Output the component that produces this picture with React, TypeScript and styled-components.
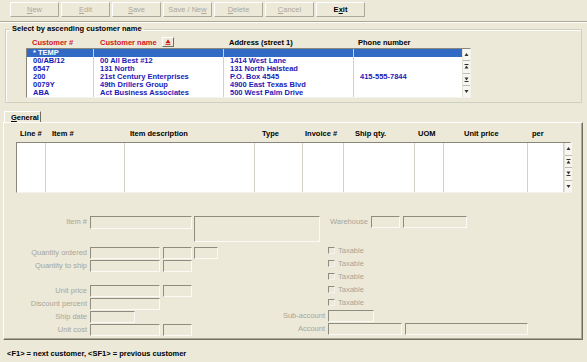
import styled, { createGlobalStyle } from 'styled-components';

const Global = createGlobalStyle`
  html, body { margin: 0; padding: 0; background: #ECE9D8; }
  body {
    font-family: "Liberation Sans", Arial, sans-serif;
    font-size: 7.5px;
    width: 587px; height: 362px; overflow: hidden;
  }
  * { box-sizing: border-box; }
`;

const Toolbar = styled.div`
  display: flex; gap: 2px;
  height: 22px; padding: 2px 0 0 10px;
  border-bottom: 1px solid #ACA899;
  box-shadow: 0 1px 0 #fff;
`;

const ToolButton = styled.button<{ $active?: boolean }>`
  width: 49px; height: 15px; padding: 0;
  background: #ECE9D8;
  border: 1px solid; border-color: #fff #ACA899 #ACA899 #fff;
  font-family: "Liberation Sans", Arial, sans-serif;
  font-size: 7.5px;
  font-weight: ${(p) => (p.$active ? 700 : 400)};
  color: ${(p) => (p.$active ? '#000' : '#ACA899')};
  u { text-decoration: underline; }
`;

const Group = styled.fieldset`
  margin: 3px 5px 0; padding: 3px 0 4px 20px;
  border: 1px solid #D0D0BF;
  box-shadow: inset 1px 1px 0 #fff;
  min-width: 0;
`;

const Legend = styled.legend`
  margin-left: -16px; padding: 0 2px;
  font-weight: 700; line-height: 8px; color: #000;
`;

const listCols = '67px 130px 130px 108px 8px';

const HeaderRow = styled.div`
  display: grid; grid-template-columns: ${listCols};
  height: 12px; align-items: center;
`;

const HeadCell = styled.div<{ $red?: boolean; $pad?: number }>`
  display: flex; align-items: center;
  padding-left: ${(p) => p.$pad ?? 6}px;
  font-weight: 700;
  color: ${(p) => (p.$red ? '#D01818' : '#000')};
`;

const SortButton = styled.span`
  display: inline-flex; align-items: center; justify-content: center;
  width: 12px; height: 10px; margin-left: 5px;
  border: 1px solid; border-color: #fff #716F64 #716F64 #fff;
  background: #ECE9D8;
`;

const ListBox = styled.div`
  display: flex;
  width: 445px; height: 50px;
  border: 1px solid; border-color: #8A877A #F4F3EE #F4F3EE #8A877A;
  background: #fff;
`;

const ListRows = styled.div`
  flex: 1; display: flex; flex-direction: column;
`;

const ListRow = styled.div<{ $sel?: boolean }>`
  display: grid; grid-template-columns: 67px 130px 130px 1fr;
  height: 8px; line-height: 8px;
  background: ${(p) => (p.$sel ? '#316AC5' : '#fff')};
  color: ${(p) => (p.$sel ? '#fff' : '#1A1AB8')};
  font-weight: 700;
`;

const ListCell = styled.div`
  padding-left: 6px; white-space: nowrap; overflow: hidden;
  border-right: 1px solid #D4D0C8;
  &:last-child { border-right: none; }
`;

const Scroll = styled.div`
  width: 8px; display: flex; flex-direction: column;
  background: #F7F6F1; border-left: 1px solid #E4E2D8;
`;

const ScrollBtn = styled.div`
  flex: 1; display: flex; align-items: center; justify-content: center;
  border-bottom: 1px solid #BDBAAE;
  &:last-child { border-bottom: none; }
`;

const TabStrip = styled.div`
  display: flex; margin: 8px 0 0 4px; height: 11px;
`;

const Tab = styled.div`
  width: 37px; padding-left: 6px; line-height: 11px;
  font-weight: 700; color: #000;
  border-top: 1px solid #fff; border-left: 1px solid #fff;
  border-right: 1px solid #716F64;
  u { text-decoration: underline; }
`;

const Panel = styled.div`
  margin-left: 3px; width: 580px; height: 218px;
  border: 1px solid; border-color: #fff #716F64 #716F64 #fff;
  box-shadow: inset -1px -1px 0 #ACA899;
  padding: 4px 0 0 12px;
`;

const gridCols = '29px 79px 130px 48px 41px 71px 29px 84px 36px 8px';

const GridHead = styled.div`
  display: grid; grid-template-columns: ${gridCols};
  height: 12px; align-items: center; margin-bottom: 3px;
`;

const GridHeadCell = styled.div<{ $pad: number }>`
  padding-left: ${(p) => p.$pad}px; font-weight: 700; color: #000; white-space: nowrap;
`;

const GridBox = styled.div`
  display: grid; grid-template-columns: ${gridCols};
  width: 555px; height: 51px;
  border: 1px solid; border-color: #8A877A #F4F3EE #F4F3EE #8A877A;
  background: #fff;
`;

const GridCol = styled.div`
  border-right: 1px solid #D4D0C8;
`;

const Form = styled.div`
  margin: 23px 0 0 -12px;
  display: flex; flex-direction: column;
`;

const TopRow = styled.div`
  display: flex; align-items: flex-start; height: 30px;
`;

const Label = styled.div<{ $w: number }>`
  width: ${(p) => p.$w}px; margin-right: 3px;
  text-align: right; color: #A8A598; white-space: nowrap;
  line-height: 12px;
`;

const Field = styled.div<{ $w: number; $h?: number; $gap?: number }>`
  width: ${(p) => p.$w}px; height: ${(p) => p.$h ?? 12}px;
  margin-right: ${(p) => p.$gap ?? 2}px;
  border: 1px solid; border-color: #8F8C7F #FBFAF6 #FBFAF6 #8F8C7F;
  flex-shrink: 0;
`;

const Bottom = styled.div`
  display: flex;
`;

const LeftCol = styled.div`
  width: 272px; display: flex; flex-direction: column;
`;

const RightCol = styled.div`
  display: flex; flex-direction: column; margin-top: -2px;
`;

const Row = styled.div<{ $after?: number }>`
  display: flex; align-items: center; height: 13px;
  margin-bottom: ${(p) => p.$after ?? 0}px;
`;

const Check = styled.span`
  width: 7px; height: 7px; margin-right: 3px;
  border: 1px solid; border-color: #8F8C7F #F4F3EE #F4F3EE #8F8C7F;
`;

const CheckText = styled.span`
  color: #A8A598;
`;

const Status = styled.div`
  padding: 9px 0 0 7px; font-weight: 700; color: #000;
`;

const Arrow = ({ d }: { d: 'up' | 'down' | 'pgup' | 'pgdn' }) => (
  <svg width="5" height="5" viewBox="0 0 5 5">
    {d === 'up' && <path d="M2.5 1 L4.5 4 L0.5 4 Z" fill="#333" />}
    {d === 'down' && <path d="M0.5 1 L4.5 1 L2.5 4 Z" fill="#333" />}
    {d === 'pgup' && <><rect x="0.5" y="0" width="4" height="1" fill="#333" /><path d="M2.5 1.5 L4.5 4.5 L0.5 4.5 Z" fill="#333" /></>}
    {d === 'pgdn' && <><path d="M0.5 0.5 L4.5 0.5 L2.5 3.5 Z" fill="#333" /><rect x="0.5" y="4" width="4" height="1" fill="#333" /></>}
  </svg>
);

const ScrollBar = () => (
  <Scroll>
    <ScrollBtn><Arrow d="up" /></ScrollBtn>
    <ScrollBtn><Arrow d="pgup" /></ScrollBtn>
    <ScrollBtn><Arrow d="pgdn" /></ScrollBtn>
    <ScrollBtn><Arrow d="down" /></ScrollBtn>
  </Scroll>
);

const customers = [
  ['* TEMP', '', '', ''],
  ['00/AB/12', '00 All Best #12', '1414 West Lane', ''],
  ['6547', '131 North', '131 North Halstead', ''],
  ['200', '21st Century Enterprises', 'P.O. Box 4545', '415-555-7844'],
  ['0079Y', '49th Drillers Group', '4900 East Texas Blvd', ''],
  ['ABA', 'Act Business Associates', '500 West Palm Drive', ''],
];

const gridHeads: [string, number][] = [
  ['Line #', 4], ['Item #', 7], ['Item description', 6], ['Type', 8], ['Invoice #', 3],
  ['Ship qty.', 12], ['UOM', 4], ['Unit price', 21], ['per', 5],
];

export default function App() {
  return (
    <>
      <Global />
      <Toolbar>
        <ToolButton><u>N</u>ew</ToolButton>
        <ToolButton><u>E</u>dit</ToolButton>
        <ToolButton><u>S</u>ave</ToolButton>
        <ToolButton>Save / Ne<u>w</u></ToolButton>
        <ToolButton><u>D</u>elete</ToolButton>
        <ToolButton><u>C</u>ancel</ToolButton>
        <ToolButton $active>E<u>x</u>it</ToolButton>
      </Toolbar>

      <Group>
        <Legend>Select by ascending customer name</Legend>
        <HeaderRow>
          <HeadCell $red>Customer #</HeadCell>
          <HeadCell $red $pad={7}>
            Customer name
            <SortButton>
              <svg width="6" height="6" viewBox="0 0 6 6">
                <path d="M3 0.5 L5.5 4 L0.5 4 Z" fill="#D01818" />
                <rect x="0.5" y="4.8" width="5" height="1" fill="#D01818" />
              </svg>
            </SortButton>
          </HeadCell>
          <HeadCell>Address (street 1)</HeadCell>
          <HeadCell $pad={5}>Phone number</HeadCell>
        </HeaderRow>
        <ListBox>
          <ListRows>
            {customers.map((c, i) => (
              <ListRow key={i} $sel={i === 0}>
                {c.map((v, j) => <ListCell key={j}>{v}</ListCell>)}
              </ListRow>
            ))}
          </ListRows>
          <ScrollBar />
        </ListBox>
      </Group>

      <TabStrip>
        <Tab><u>G</u>eneral</Tab>
      </TabStrip>
      <Panel>
        <GridHead>
          {gridHeads.map(([t, p]) => <GridHeadCell key={t} $pad={p}>{t}</GridHeadCell>)}
        </GridHead>
        <GridBox>
          {gridHeads.map(([t]) => <GridCol key={t} />)}
          <ScrollBar />
        </GridBox>

        <Form>
          <TopRow>
            <Label $w={83}>Item #</Label>
            <Field $w={102} $h={13} />
            <Field $w={126} $h={26} $gap={4} />
            <Label $w={44}>Warehouse</Label>
            <Field $w={29} $gap={3} />
            <Field $w={64} />
          </TopRow>
          <Bottom>
            <LeftCol>
              <Row>
                <Label $w={83}>Quantity ordered</Label>
                <Field $w={70} $gap={3} /><Field $w={29} /><Field $w={24} />
              </Row>
              <Row $after={12}>
                <Label $w={83}>Quantity to ship</Label>
                <Field $w={70} $gap={3} /><Field $w={29} />
              </Row>
              <Row>
                <Label $w={83}>Unit price</Label>
                <Field $w={70} $gap={3} /><Field $w={29} />
              </Row>
              <Row>
                <Label $w={83}>Discount percent</Label>
                <Field $w={70} />
              </Row>
              <Row>
                <Label $w={83}>Ship date</Label>
                <Field $w={45} />
              </Row>
              <Row>
                <Label $w={83}>Unit cost</Label>
                <Field $w={70} $gap={3} /><Field $w={29} />
              </Row>
            </LeftCol>
            <RightCol>
              {[0, 1, 2, 3, 4].map((i) => (
                <Row key={i}>
                  <Label $w={49} />
                  <Check /><CheckText>Taxable</CheckText>
                </Row>
              ))}
              <Row>
                <Label $w={49}>Sub-account</Label>
                <Field $w={46} />
              </Row>
              <Row>
                <Label $w={49}>Account</Label>
                <Field $w={74} $gap={3} /><Field $w={123} />
              </Row>
            </RightCol>
          </Bottom>
        </Form>
      </Panel>
      <Status>&lt;F1&gt; = next customer, &lt;SF1&gt; = previous customer</Status>
    </>
  );
}
